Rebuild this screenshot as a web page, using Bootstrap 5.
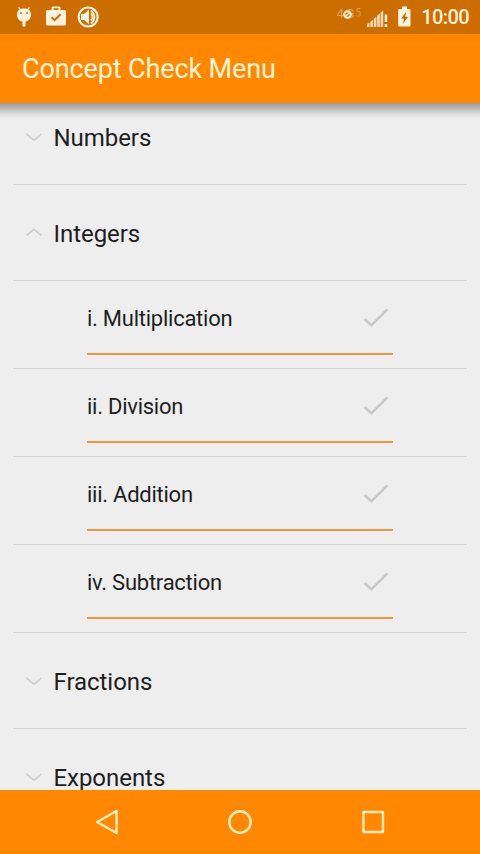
<!DOCTYPE html>
<html lang="en">
<head>
<meta charset="utf-8">
<meta name="viewport" content="width=device-width, initial-scale=1">
<title>Concept Check Menu</title>
<link rel="stylesheet" href="https://cdn.jsdelivr.net/npm/bootstrap@5.3.0/dist/css/bootstrap.min.css">
<style>
body{font-family:Roboto,"Liberation Sans",sans-serif;background:#eee;color:#1e1e1e}
svg{display:block;flex:none}
.status-bar{height:34px;background:#cc6d00;color:#fff0d8;padding:0 11px 0 14px}
.clock{font-size:20px;font-weight:500;line-height:35px;letter-spacing:-.6px}
.app-bar{height:69px;background:#ff8800;color:#fff3d8;padding:2px 22px 0;--bs-navbar-padding-y:0}
.app-title{font-size:27px;line-height:67px;letter-spacing:-.12px}
.menu-area{min-height:0}
.bar-shadow{position:absolute;left:0;right:0;top:0;height:16px;z-index:2;background:linear-gradient(#999b96,#b4b4b2 30%,#dadada 65%,#eee)}
.menu-list{margin:-14px 13px 0}
.topic{height:96px;border-bottom:1px solid #d2d2d2;padding:1px 0 0 12px;font-size:24px;letter-spacing:-.05px}
.topic svg{margin-right:10.5px}
.topic span{padding-top:1px}
.lesson{height:88px;border-bottom:1px solid #d2d2d2;padding:0 74px}
.lesson-box{height:74px;border-bottom:2px solid #f5953a;font-size:22px;letter-spacing:-.25px;padding:2px 4px 0 0}
.nav-keys{height:64px;background:#ff8800}
</style>
<script defer src="https://cdn.jsdelivr.net/npm/bootstrap@5.3.0/dist/js/bootstrap.bundle.min.js"></script>
</head>
<body>
<svg class="d-none">
<symbol id="down" viewBox="0 0 18 12"><path d="M1.500 3 9 9.300 16.500 3" fill="none" stroke="#d0d0d0" stroke-width="2"/></symbol>
<symbol id="up" viewBox="0 0 18 12"><path d="M1.500 8.500 9 2.200 16.500 8.500" fill="none" stroke="#d0d0d0" stroke-width="2"/></symbol>
<symbol id="tick" viewBox="0 0 26 20"><path d="M1.500 11 8.400 17.300 24.300 1.500" fill="none" stroke="#c8c8c8" stroke-width="2.600"/></symbol>
</svg>
<div class="d-flex flex-column vh-100 overflow-hidden">
<header class="status-bar d-flex align-items-center justify-content-between flex-shrink-0">
<svg width="86" height="34" viewBox="14 0 86 34" fill="#fff3df">
<path d="M18.500 7.500 21 10M29.500 7.500 27 10" stroke="#fff3df" stroke-width="1.200"/>
<path d="M17 14.500c0-4 3-6 7-6s7 2 7 6c0 3.500-2 6.500-5.500 7v4.500q-1.500 1.600-3 0V21.500c-3.500-.5-5.500-3.500-5.500-7z"/>
<circle cx="21" cy="13" r=".9" fill="#cc6d00"/><circle cx="27" cy="13" r=".9" fill="#cc6d00"/>
<path d="M47.500 10h4V8q0-1.500 1.500-1.500h6q1.500 0 1.500 1.500v2h4q1.500 0 1.500 1.500V24q0 1.500-1.500 1.500h-17Q46 25.500 46 24V11.500Q46 10 47.500 10zM53.500 10h5V8.300h-5z" fill-rule="evenodd"/>
<path d="M51.500 17.200 54.600 20.200 60.500 14.200" fill="none" stroke="#cc6d00" stroke-width="2"/>
<circle cx="88.200" cy="17" r="9.500" fill="none" stroke="#fff3df" stroke-width="2.200"/>
<path d="M81 14h3l5-4.500v15L84 20h-3z"/>
<path d="M91 13.500q3 3.500 0 7M91 10.300q7 6.700 0 13.400" fill="none" stroke="#fff3df" stroke-width="1.700"/>
</svg>
<div class="d-flex align-items-center">
<svg width="84" height="34" viewBox="338 0 84 34" fill="#fff3df">
<text x="337.500" y="17.500" font-size="13" fill="#e2a360" textLength="18">4G</text>
<path d="M361.500 8.500H358v3h3v4.500h-3.500" fill="none" stroke="#dc9850" stroke-width="1"/>
<circle cx="348.500" cy="14.500" r="3.300" fill="#cc6d00" stroke="#fff3df" stroke-width="2"/><path d="M350.500 12.500 346.500 16.500" stroke="#fff3df" stroke-width="1.500"/>
<path d="M368 27v-3l2.600-1.500V27zM371.400 27v-5.200l2.600-2V27zM374.800 27v-8.200l2.600-2V27zM378.200 27V15.500l2.600-2V27zM381.600 27V12.500l2.600-2V27z" fill="#f6d9b2"/>
<path d="M385.700 14.500h2.500v7.500h-2.500zM385.700 24h2.500v3h-2.500z"/>
<path d="M403 6.500h5V9h2.500q1 0 1 1v15.500q0 1-1 1h-10.300q-1 0-1-1V10q0-1 1-1h2.800z"/>
<path d="M407.500 11.500 402.300 18.500h3L403.800 24 409 16.800h-3z" fill="#b86400"/>
</svg>
<span class="clock">10:00</span>
</div>
</header>
<nav class="navbar app-bar flex-shrink-0"><h1 class="app-title mb-0 fw-normal">Concept Check Menu</h1></nav>
<main class="menu-area flex-grow-1 position-relative overflow-hidden">
<div class="bar-shadow"></div>
<div class="menu-list">
<div class="topic d-flex align-items-center"><svg width="18" height="12"><use href="#down"/></svg><span>Numbers</span></div>
<div class="topic d-flex align-items-center"><svg width="18" height="12"><use href="#up"/></svg><span>Integers</span></div>
<div class="lesson"><div class="lesson-box d-flex align-items-center justify-content-between"><span>i. Multiplication</span><svg width="26" height="20"><use href="#tick"/></svg></div></div>
<div class="lesson"><div class="lesson-box d-flex align-items-center justify-content-between"><span>ii. Division</span><svg width="26" height="20"><use href="#tick"/></svg></div></div>
<div class="lesson"><div class="lesson-box d-flex align-items-center justify-content-between"><span>iii. Addition</span><svg width="26" height="20"><use href="#tick"/></svg></div></div>
<div class="lesson"><div class="lesson-box d-flex align-items-center justify-content-between"><span>iv. Subtraction</span><svg width="26" height="20"><use href="#tick"/></svg></div></div>
<div class="topic d-flex align-items-center"><svg width="18" height="12"><use href="#down"/></svg><span>Fractions</span></div>
<div class="topic d-flex align-items-center"><svg width="18" height="12"><use href="#down"/></svg><span>Exponents</span></div>
</div>
</main>
<footer class="nav-keys d-flex align-items-center justify-content-center flex-shrink-0">
<svg width="290" height="64" viewBox="95 790 290 64" fill="none" stroke="#ffedc4" stroke-width="2.400" stroke-linejoin="round"><path d="M97 822 116.500 811V833z"/><circle cx="240" cy="822" r="10.700"/><rect x="363.500" y="812" width="19.500" height="20"/></svg>
</footer>
</div>
</body>
</html>
